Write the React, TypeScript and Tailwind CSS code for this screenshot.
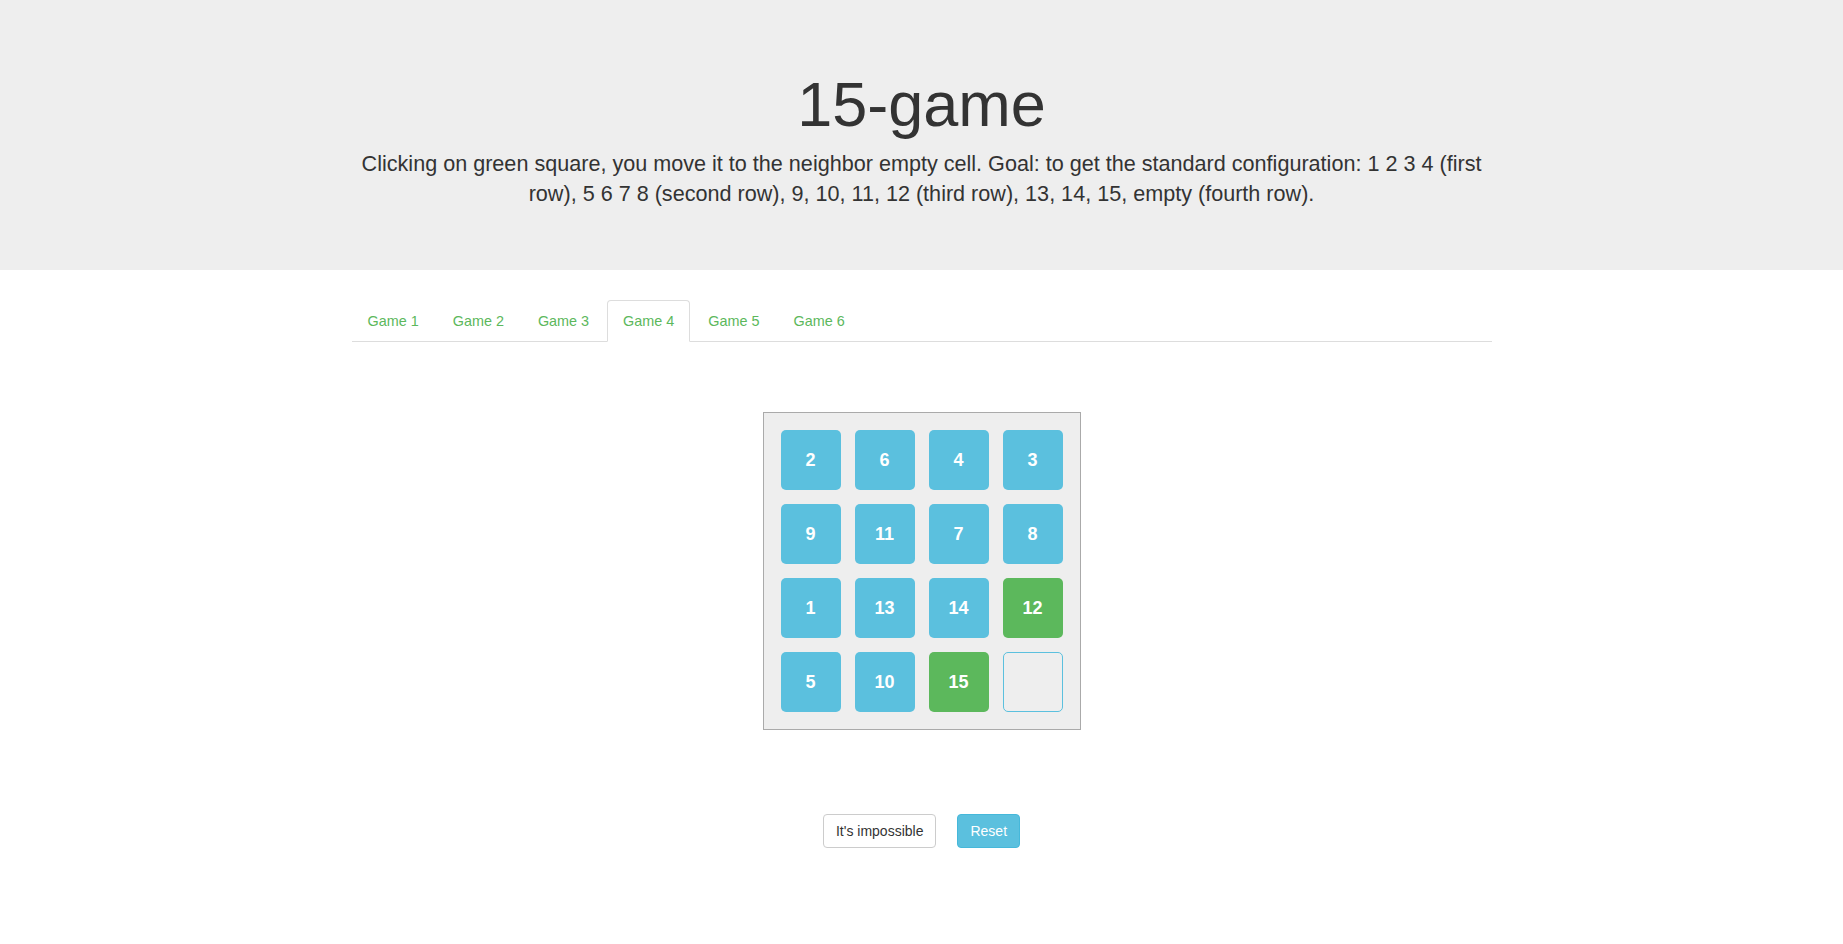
const tabs = ["Game 1", "Game 2", "Game 3", "Game 4", "Game 5", "Game 6"];

// board state for Game 4, 0 = empty cell
const board = [2, 6, 4, 3, 9, 11, 7, 8, 1, 13, 14, 12, 5, 10, 15, 0];
const movable = [12, 15];

export default function App() {
  return (
    <div
      className="min-h-screen w-full bg-white text-[#333]"
      style={{ fontFamily: '"Liberation Sans", Arial, Helvetica, sans-serif' }}
    >
      {/* Jumbotron */}
      <section className="w-full bg-[#eee] pt-[50px] pb-[46px]">
        <div className="mx-auto w-[1170px] px-[15px] text-center">
          <h1 className="mt-[20px] mb-[10px] text-[63px] leading-[1.1] font-normal">
            15-game
          </h1>
          <p className="mb-[15px] text-[21.6px] leading-[30px]">
            Clicking on green square, you move it to the neighbor empty cell.
            Goal: to get the standard configuration: 1 2 3 4 (first row), 5 6 7
            8 (second row), 9, 10, 11, 12 (third row), 13, 14, 15, empty (fourth
            row).
          </p>
        </div>
      </section>

      <section className="mx-auto w-[1170px] px-[15px] pt-[30px]">
        {/* Tabs */}
        <ul className="flex border-b border-[#ddd]">
          {tabs.map((t) => (
            <li key={t} className="-mb-px mr-[2px]">
              <a
                className={
                  t === "Game 4"
                    ? "block rounded-t-[4px] border border-[#ddd] border-b-transparent bg-white px-[15px] py-[10px] text-[14.4px] leading-[20px] text-[#5cb85c]"
                    : "block rounded-t-[4px] border border-transparent px-[15px] py-[10px] text-[14.4px] leading-[20px] text-[#5cb85c]"
                }
              >
                {t}
              </a>
            </li>
          ))}
        </ul>

        {/* Board */}
        <div className="mt-[70px] flex justify-center">
          <div className="grid grid-cols-4 gap-[14px] border border-[#aaa] bg-[#eee] p-[17px]">
            {board.map((n) =>
              n === 0 ? (
                <div
                  key={n}
                  className="h-[60px] w-[60px] rounded-[5px] border border-[#5bc0de] bg-[#eee]"
                />
              ) : (
                <div
                  key={n}
                  className={
                    movable.includes(n)
                      ? "flex h-[60px] w-[60px] items-center justify-center rounded-[5px] bg-[#5cb85c] text-[18px] font-bold text-white"
                      : "flex h-[60px] w-[60px] items-center justify-center rounded-[5px] bg-[#5bc0de] text-[18px] font-bold text-white"
                  }
                >
                  {n}
                </div>
              )
            )}
          </div>
        </div>

        {/* Buttons */}
        <div className="mt-[84px] flex justify-center gap-[21px]">
          <button className="h-[34px] rounded-[4px] border border-[#ccc] bg-white px-[12px] text-[14px] leading-[20px] text-[#333]">
            It's impossible
          </button>
          <button className="h-[34px] rounded-[4px] border border-[#46b8da] bg-[#5bc0de] px-[12px] text-[14px] leading-[20px] text-white">
            Reset
          </button>
        </div>
      </section>
    </div>
  );
}
